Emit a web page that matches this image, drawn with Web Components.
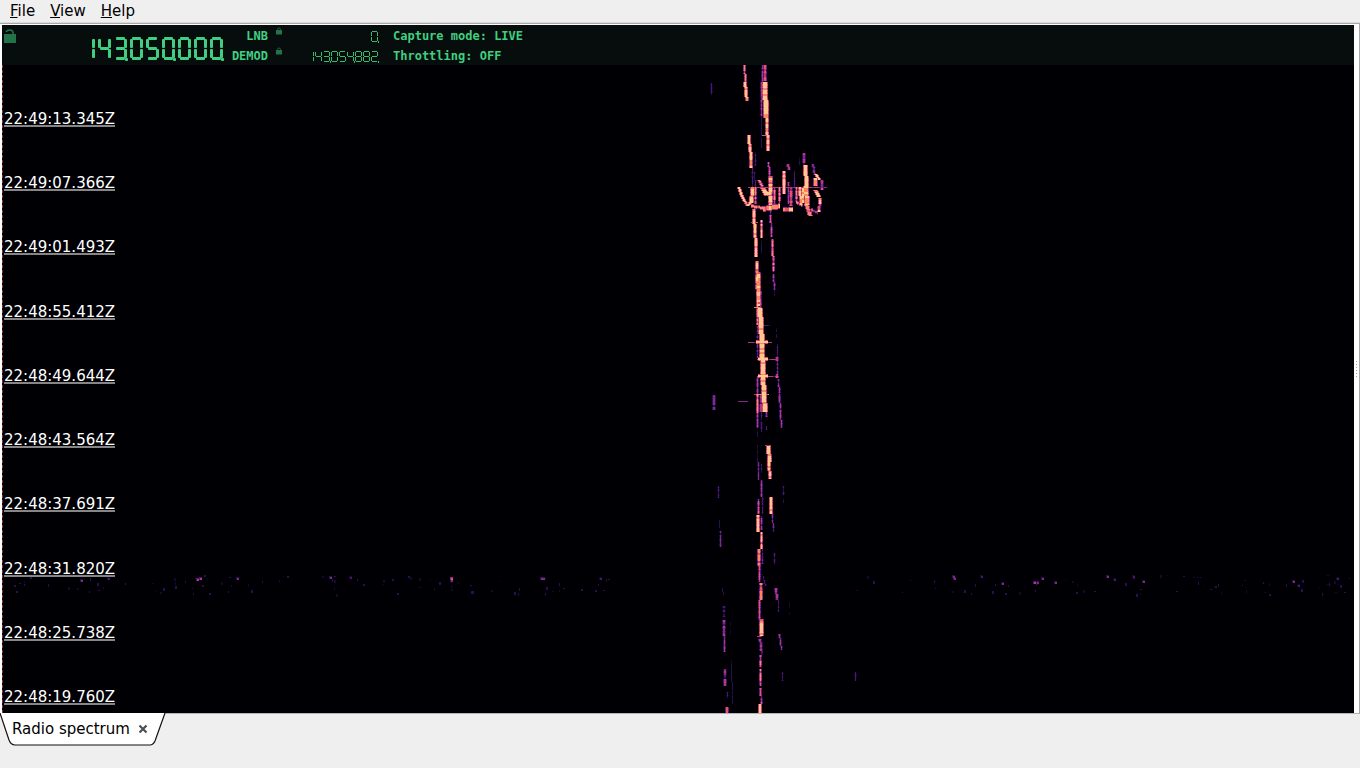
<!DOCTYPE html>
<html lang="en">
<head>
<meta charset="utf-8">
<title>Radio spectrum</title>
<style>
html, body {
  height: 100%;
  margin: 0;
}
body {
  background: #efefef;
  color: #000;
  font: 15px/18px "DejaVu Sans", sans-serif;
  overflow: hidden;
}
</style>
</head>
<body>
<template id="app-window">
  <style>
    :host { display: flex; flex-direction: column; height: 100%; }
    slot[name="menu"] { display: block; }
    .frame {
      flex: 1;
      display: flex;
      min-height: 0;
      background: #fff;
      border-top: 1px solid #a8a8a8;
      border-right: 1px solid #a8a8a8;
      border-bottom: 1px solid #b4b4b4;
      padding: 1px 0 0 2px;
    }
    .main { flex: 1; display: flex; flex-direction: column; min-width: 0; }
    .grip {
      width: 5px;
      display: grid;
      align-content: center;
      justify-content: center;
      gap: 2px;
    }
    .grip i { width: 1px; height: 1px; background: #a0a0a0; }
    .tabs { height: 54px; }
  </style>
  <slot name="menu"></slot>
  <div class="frame">
    <div class="main"><slot></slot></div>
    <div class="grip"><i></i><i></i><i></i><i></i><i></i><i></i></div>
  </div>
  <div class="tabs"><slot name="tabs"></slot></div>
</template>

<template id="menu-bar">
  <style>
    :host { display: block; height: 23px; border-bottom: 1px solid #dcdcdc; box-sizing: border-box; }
    nav { display: flex; padding-left: 3px; gap: 1px; }
    ::slotted(button) {
      border: 0;
      background: none;
      color: inherit;
      font: inherit;
      line-height: 22px;
      padding: 0 7px;
    }
  </style>
  <nav><slot></slot></nav>
</template>

<template id="lcd-readout">
  <style>
    :host { display: flex; justify-content: flex-end; --on: #3fcf80; }
    .digit {
      display: grid;
      grid-template: 3px 7px 3px 7px 3px / 3px 7px 3px;
      margin-right: 3px;
    }
    .digit i { border-radius: 1px; }
    .digit i.on { background: var(--on); }
    .a { grid-area: 1 / 2; } .b { grid-area: 2 / 3; } .c { grid-area: 4 / 3; }
    .d { grid-area: 5 / 2; } .e { grid-area: 4 / 1; } .f { grid-area: 2 / 1; }
    .g { grid-area: 3 / 2; }
    .a, .d, .g { margin: 0 -1px; }
    .b, .c, .e, .f { margin: -1px 0; }
    .digit .dot { grid-area: 5 / 3; background: var(--on); margin: 1px -1px -1px 1px; }
    :host([small]) { --on: #38b972; }
    :host([small]) .digit {
      grid-template: 1px 4px 1px 4px 1px / 1px 5px 1px;
      margin-right: 1px;
    }
    :host([small]) .digit i { border-radius: 0; }
    :host([small]) :is(.a, .b, .c, .d, .e, .f, .g) { margin: 0; }
    :host([small]) .dot { margin: 0 -1px -1px 1px; }
  </style>
</template>

<template id="pad-lock">
  <style>
    :host { display: block; width: 12px; height: 14px; color: #22734a; }
    :host([small]) { width: 6px; height: 8px; }
    svg { display: block; width: 100%; height: 100%; }
  </style>
  <svg viewBox="0 0 12 14" fill="none" stroke="currentColor" stroke-width="1.6">
    <path class="shackle"/>
    <path d="M0 5h12v9H0z" fill="currentColor" stroke="none"/>
  </svg>
</template>

<template id="tuner-bar">
  <style>
    :host {
      display: flex;
      height: 40px;
      background: #070d0d;
      color: #3fcf80;
      font: bold 12px/20px "DejaVu Sans Mono", monospace;
    }
    .lock { padding: 4px 2px; }
    .main { width: 208px; padding-top: 12px; }
    .names { width: 42px; text-align: right; }
    .locks { padding: 2px 8px; display: grid; grid-auto-rows: 20px; }
    .values { width: 89px; display: grid; grid-auto-rows: 20px; padding-top: 6px; height: 34px; }
    .names div { height: 20px; white-space: nowrap; }
    .names, .status { padding-top: 1px; }
    .status { padding-left: 14px; white-space: nowrap; }
  </style>
  <div class="lock"><pad-lock open></pad-lock></div>
  <lcd-readout class="main" value="143.050.000."></lcd-readout>
  <div class="names"><div>LNB</div><div>DEMOD</div></div>
  <div class="locks"><pad-lock small></pad-lock><pad-lock small></pad-lock></div>
  <div class="values">
    <lcd-readout small value="0."></lcd-readout>
    <lcd-readout small value="143.054.882."></lcd-readout>
  </div>
  <div class="status"><slot></slot></div>
</template>

<template id="water-fall">
  <style>
    :host {
      flex: 1;
      display: grid;
      min-height: 0;
      background: #000004;
      color: #fff;
    }
    svg, .times { grid-area: 1 / 1; min-height: 0; }
    svg { width: 100%; height: 100%; display: block; }
    .times {
      display: flex;
      flex-direction: column;
      justify-content: space-between;
      align-items: flex-start;
      border-left: 1px dashed #8c2f2f;
      padding: 48px 0 8px 1px;
    }
    time { border-bottom: 2px solid #868686; line-height: 12px; }
  </style>
  <svg viewBox="2 65 1352 648" preserveAspectRatio="none" shape-rendering="crispEdges"></svg>
  <div class="times"></div>
</template>

<template id="dock-tab">
  <style>
    :host { display: inline-grid; margin-top: -1px; }
    svg, .face { grid-area: 1 / 1; }
    svg { width: 166px; height: 33px; }
    .face { display: flex; align-items: center; padding: 0 0 1px 12px; gap: 8px; }
    button { border: 0; background: none; padding: 0; font: inherit; color: inherit; }
    .close { width: 10px; height: 10px; }
    .close svg { display: block; width: 10px; height: 10px; }
  </style>
  <svg viewBox="0 0 166 33">
    <path d="M0 0L9 27Q11 32 15 32H150Q153 32 155 28L165 0" fill="#fff" stroke="#111" stroke-width="1.2"/>
  </svg>
  <div class="face">
    <button role="tab" aria-selected="true"><slot></slot></button>
    <button class="close" aria-label="Close"><svg viewBox="0 0 10 10"><path d="M1.500 1.500l7 7m0-7l-7 7" stroke="#4d4f53" stroke-width="2.200"/></svg></button>
  </div>
</template>

<app-window>
  <menu-bar slot="menu">
    <button><u>F</u>ile</button>
    <button><u>V</u>iew</button>
    <button><u>H</u>elp</button>
  </menu-bar>
  <tuner-bar>
    <div>Capture mode: LIVE</div>
    <div>Throttling: OFF</div>
  </tuner-bar>
  <water-fall times="22:49:13.345Z 22:49:07.366Z 22:49:01.493Z 22:48:55.412Z 22:48:49.644Z 22:48:43.564Z 22:48:37.691Z 22:48:31.820Z 22:48:25.738Z 22:48:19.760Z"></water-fall>
  <dock-tab slot="tabs">Radio spectrum</dock-tab>
</app-window>

<script>
class Base extends HTMLElement {
  constructor() {
    super();
    this.attachShadow({ mode: 'open' }).appendChild(
      document.getElementById(this.localName).content.cloneNode(true)
    );
  }
}

class AppWindow extends Base {}
class MenuBar extends Base {}
class TunerBar extends Base {}
class DockTab extends Base {}

class PadLock extends Base {
  connectedCallback() {
    this.shadowRoot.querySelector('.shackle').setAttribute('d',
      this.hasAttribute('open') ? 'M2 3Q3 1 6 1Q9 1 9 4V7' : 'M3 7V4Q3 1 6 1Q9 1 9 4V7');
  }
}

// lit segments of each digit
var SEGMENTS = {
  0: 'abcdef', 1: 'bc', 2: 'abged', 3: 'abgcd', 4: 'fgbc',
  5: 'afgcd', 6: 'afgcde', 7: 'abc', 8: 'abcdefg', 9: 'abcdfg'
};

class LcdReadout extends Base {
  connectedCallback() {
    let value = this.getAttribute('value');
    this.setAttribute('role', 'img');
    this.setAttribute('aria-label', value);
    for (let m of value.match(/\d\.?/g)) {
      let digit = document.createElement('span');
      digit.className = 'digit';
      digit.innerHTML = [...'abcdefg'].map(s =>
        `<i class="${s}${SEGMENTS[m[0]].includes(s) ? ' on' : ''}"></i>`).join('')
        + (m[1] ? '<i class="dot"></i>' : '');
      this.shadowRoot.append(digit);
    }
  }
}

var PALETTE = ['#100b2b', '#241052', '#51127c', '#862781', '#b63679', '#e65164', '#fb8761', '#fec98d'];

// x1, y1, x2, y2, width, level, roughness
var TRACES = [
  [744, 65, 745, 82, 1, 6, 1], [745, 82, 747, 101, 2, 7, 0], [711, 83, 711, 95, 1, 2, 1],
  [762, 65, 762, 82, 1, 4, 3], [765, 65, 765, 82, 2, 5, 3], [765, 82, 766, 118, 4, 7, 0],
  [761, 82, 761, 116, 1, 4, 2], [761, 116, 761, 148, 1, 1, 1],
  [767, 118, 768, 151, 2, 7, 1], [762, 135, 770, 135, 1, 5, 1],
  [749, 135, 750, 152, 2, 7, 0], [751, 152, 751, 168, 2, 7, 1], [752, 168, 752, 187, 1, 2, 1],
  [754, 172, 755, 187, 1, 2, 1], [755, 152, 755, 166, 1, 2, 2], [768, 162, 770, 180, 1, 5, 1],
  // burst
  [748, 187, 818, 187, 1, 4, 1], [818, 187, 827, 187, 1, 3, 2],
  [739, 187, 742, 196, 2, 7, 0], [742, 196, 748, 206, 2, 7, 0], [748, 205, 751, 201, 2, 7, 0],
  [752, 187, 751, 203, 3, 7, 0],
  [755, 187, 755, 204, 1, 6, 2], [759, 180, 763, 188, 2, 6, 1], [763, 188, 767, 195, 4, 7, 0],
  [770, 176, 770, 205, 3, 7, 1], [764, 193, 771, 193, 3, 7, 0],
  [774, 188, 774, 204, 1, 6, 1], [779, 187, 779, 203, 1, 6, 1],
  [751, 206, 763, 208, 2, 6, 3], [763, 209, 780, 206, 4, 7, 2],
  [784, 171, 784, 194, 2, 7, 3], [788, 164, 789, 170, 2, 4, 1], [783, 179, 783, 186, 1, 2, 1],
  [788, 182, 788, 204, 1, 4, 3], [791, 187, 791, 206, 2, 5, 3], [783, 209, 793, 209, 3, 7, 1],
  [794, 170, 794, 187, 1, 2, 1], [796, 187, 796, 202, 1, 6, 1], [800, 187, 801, 205, 2, 7, 1],
  [796, 202, 803, 206, 2, 6, 2], [804, 153, 804, 165, 2, 4, 2], [805, 165, 806, 186, 3, 7, 2],
  [806, 186, 807, 205, 4, 7, 1], [803, 188, 803, 203, 2, 7, 2], [806, 204, 810, 216, 3, 6, 3],
  [813, 164, 815, 175, 2, 4, 3], [816, 174, 820, 180, 2, 7, 2], [815, 178, 815, 186, 3, 7, 2],
  [822, 180, 822, 190, 2, 5, 2], [815, 190, 819, 197, 3, 7, 1], [820, 198, 819, 212, 2, 7, 2],
  [811, 210, 818, 213, 2, 5, 2], [799, 157, 799, 165, 1, 1, 1],
  // main carrier
  [754, 209, 755, 238, 2, 7, 0], [756, 238, 756, 257, 2, 7, 0], [757, 261, 757, 290, 2, 7, 2],
  [758, 272, 758, 306, 3, 7, 1], [757, 291, 757, 325, 1, 6, 2], [760, 291, 760, 308, 1, 5, 2],
  [760, 308, 762, 342, 4, 7, 0], [762, 342, 763, 376, 4, 7, 0], [763, 376, 765, 412, 4, 7, 0],
  [766, 412, 766, 417, 1, 4, 1],
  [761, 220, 761, 238, 1, 7, 1], [761, 240, 761, 254, 1, 1, 1], [751, 222, 758, 222, 1, 5, 1],
  [770, 209, 771, 237, 1, 5, 2], [772, 239, 773, 272, 1, 6, 2], [773, 274, 774, 290, 1, 4, 1],
  [774, 288, 774, 296, 1, 1, 1], [754, 307, 760, 307, 1, 6, 1],
  [758, 325, 770, 325, 1, 2, 1],
  [748, 342, 772, 342, 1, 4, 1], [756, 342, 768, 342, 2, 7, 0],
  [757, 359, 777, 359, 1, 4, 1], [758, 359, 768, 359, 2, 7, 0],
  [757, 376, 778, 376, 1, 4, 1], [758, 376, 768, 376, 2, 7, 0],
  [754, 394, 769, 394, 1, 6, 1],
  [757, 326, 757, 358, 1, 3, 2], [757, 377, 757, 394, 1, 4, 1],
  [776, 328, 776, 340, 1, 1, 1], [777, 344, 777, 359, 1, 2, 1], [777, 357, 777, 361, 2, 4, 1],
  [777, 361, 777, 375, 1, 3, 1], [777, 374, 777, 378, 2, 5, 1], [778, 379, 779, 394, 1, 4, 1],
  [779, 394, 781, 428, 1, 4, 1],
  [714, 395, 714, 410, 2, 3, 1], [738, 401, 748, 401, 1, 3, 1],
  [757, 395, 757, 413, 1, 6, 0], [757, 413, 757, 428, 1, 4, 1], [761, 394, 761, 412, 2, 4, 2],
  [761, 412, 761, 432, 1, 2, 1], [766, 426, 766, 430, 1, 2, 1], [757, 430, 757, 437, 1, 1, 1],
  [765, 445, 771, 445, 1, 4, 1], [768, 446, 769, 462, 3, 7, 0], [769, 462, 770, 479, 2, 7, 0],
  [757, 445, 757, 462, 1, 1, 1], [758, 462, 758, 480, 1, 3, 1], [761, 464, 761, 473, 1, 2, 1],
  [761, 480, 761, 497, 1, 4, 1], [758, 499, 758, 514, 1, 5, 1], [762, 497, 762, 514, 1, 2, 2],
  [771, 497, 771, 514, 2, 7, 0], [772, 514, 773, 532, 1, 3, 1],
  [758, 515, 758, 532, 2, 7, 0], [761, 516, 761, 530, 1, 4, 2],
  [761, 532, 761, 549, 1, 7, 1], [759, 549, 759, 566, 2, 6, 1], [762, 549, 762, 564, 1, 3, 3],
  [718, 486, 718, 498, 1, 2, 0], [719, 520, 719, 528, 1, 1, 1], [720, 531, 720, 547, 1, 3, 1],
  [783, 486, 783, 495, 1, 2, 1], [783, 498, 783, 503, 1, 1, 1], [774, 553, 774, 564, 1, 2, 0],
  [759, 566, 759, 582, 1, 5, 2], [762, 574, 765, 586, 1, 2, 2], [761, 583, 761, 600, 2, 6, 2],
  [759, 600, 759, 620, 1, 5, 1], [761, 619, 761, 636, 3, 7, 2], [757, 636, 762, 636, 1, 4, 1],
  [760, 637, 762, 655, 2, 4, 3], [760, 655, 760, 686, 1, 6, 4], [760, 688, 761, 704, 1, 5, 4],
  [760, 704, 760, 713, 2, 7, 0],
  [776, 588, 777, 600, 2, 4, 1], [778, 600, 778, 612, 1, 2, 0], [789, 600, 789, 615, 1, 0, 1],
  [779, 634, 781, 650, 1, 4, 1], [782, 672, 782, 681, 1, 2, 0], [855, 672, 855, 681, 1, 2, 0],
  [722, 588, 723, 595, 1, 1, 1], [724, 606, 724, 617, 2, 2, 1], [724, 620, 724, 636, 2, 4, 3],
  [724, 636, 724, 652, 1, 4, 1], [725, 669, 725, 686, 2, 4, 2], [731, 660, 732, 704, 1, 1, 0],
  [727, 692, 727, 698, 1, 2, 1], [727, 707, 727, 713, 2, 5, 1], [730, 622, 730, 635, 1, 0, 1]
];

// brighter specks of the broadband line
var SPECKS = [
  [81, 580, 3], [108, 578, 2], [197, 579, 4], [200, 578, 4], [237, 578, 3], [330, 577, 3],
  [350, 577, 2], [451, 578, 5], [451, 580, 3], [541, 578, 3], [543, 578, 3], [600, 578, 2],
  [953, 576, 3], [954, 578, 3], [981, 576, 2], [1002, 583, 3], [1034, 582, 4], [1037, 582, 3],
  [1042, 578, 3], [1055, 582, 3], [1107, 576, 3], [1114, 579, 2], [1133, 576, 2],
  [1143, 581, 3], [1293, 581, 3], [1298, 585, 2], [1337, 578, 2]
];

class WaterFall extends Base {
  connectedCallback() {
    this.shadowRoot.querySelector('.times').innerHTML =
      this.getAttribute('times').split(' ').map(t => `<time>${t}</time>`).join('');
    this.render();
  }

  render() {
    let seed = 143;
    let rnd = () => (seed = seed * 16807 % 2147483647) / 2147483647;
    let paths = PALETTE.map(() => '');
    let put = (x, y, w, h, level) => {
      if (level < 0) return;
      paths[Math.min(level, 7)] += `M${x} ${y}h${w}v${h}h-${w}z`;
    };
    for (let [x1, y1, x2, y2, w, level, rough] of TRACES) {
      let flat = Math.abs(x2 - x1) > Math.abs(y2 - y1);
      let n = Math.max(Math.abs(x2 - x1), Math.abs(y2 - y1));
      let l = level;
      for (let i = 0; i < n; i++) {
        let x = Math.round(x1 + (x2 - x1) * i / n);
        let y = Math.round(y1 + (y2 - y1) * i / n);
        if (i % 2 == 0) l = level - Math.floor(rnd() * rnd() * (rough + 2));
        let o = Math.floor(w / 2);
        let edge = l - 2 - Math.floor(rnd() * 2);
        if (flat) {
          if (w > 1) put(x, y - o - 1, 1, w + 2, edge);
          put(x, y - o, 1, w, l);
        } else {
          put(x - o - 1, y, w + 2, 1, edge);
          put(x - o, y, w, 1, l);
        }
      }
    }
    for (let i = 0; i < 190; i++) {
      let x = Math.round(10 + rnd() * 1340);
      let y = Math.round(575 + rnd() * 19);
      if (x > 610 && x < 850) continue;
      put(x, y, 1 + Math.floor(rnd() * 2), 1 + Math.floor(rnd() * 3), Math.floor(rnd() * 2));
    }
    for (let [x, y, level] of SPECKS) {
      put(x - 1, y - 1, 3, 3, level - 2);
      put(x, y, 2, 2, level);
    }
    this.shadowRoot.querySelector('svg').innerHTML =
      paths.map((d, i) => `<path fill="${PALETTE[i]}" d="${d}"/>`).join('');
  }
}

customElements.define('app-window', AppWindow);
customElements.define('menu-bar', MenuBar);
customElements.define('lcd-readout', LcdReadout);
customElements.define('pad-lock', PadLock);
customElements.define('tuner-bar', TunerBar);
customElements.define('water-fall', WaterFall);
customElements.define('dock-tab', DockTab);
</script>
</body>
</html>
